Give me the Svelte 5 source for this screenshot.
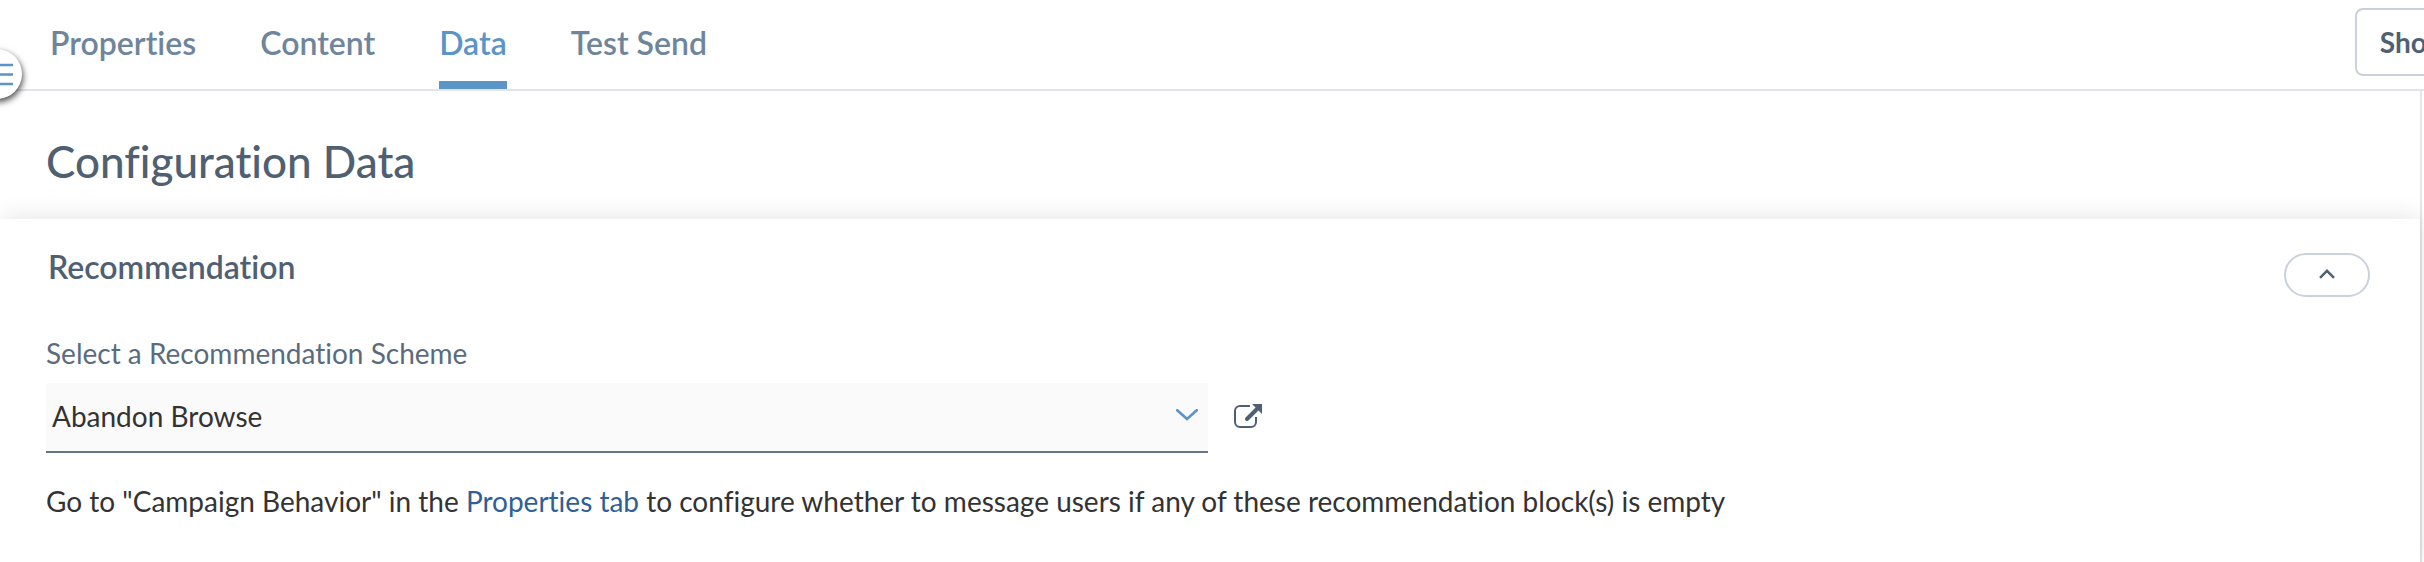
<script>
	let tabs = ['Properties', 'Content', 'Data', 'Test Send']
	let active = 'Data'
	let open = true

	let schemes = ['Abandon Browse']
	let scheme = schemes[0]
</script>

<div class="page">
	<header>
		<nav>
			{#each tabs as tab}
				<button class="tab" class:active={tab === active} on:click={() => active = tab}>{tab}</button>
			{/each}
		</nav>
		<button class="show-button">Show</button>
	</header>

	<button class="menu-toggle" aria-label="Toggle menu">
		<svg width="24" height="24" viewBox="0 0 24 24">
			<path d="M0 3h24M0 12.500h24M0 22h24" stroke="#5b94c6" stroke-width="2.500" />
		</svg>
	</button>

	<main>
		<h1>Configuration Data</h1>

		<section>
			<div class="section-head">
				<h2>Recommendation</h2>
				<button class="collapse" aria-label="Collapse section" aria-expanded={open} on:click={() => open = !open}>
					<svg class:closed={!open} width="16" height="12" viewBox="0 0 16 12">
						<path d="M1 8.800 8 1.800l7 7" fill="none" stroke="#4f6072" stroke-width="2.400" />
					</svg>
				</button>
			</div>

			{#if open}
				<label for="scheme">Select a Recommendation Scheme</label>
				<div class="scheme-row">
					<div class="select-box">
						<select id="scheme" bind:value={scheme}>
							{#each schemes as s}
								<option>{s}</option>
							{/each}
						</select>
						<svg class="arrow" width="22" height="12" viewBox="0 0 22 12">
							<path d="M1.200 1.200 11 10l9.800-8.800" fill="none" stroke="#5b94c6" stroke-width="2.600" stroke-linecap="round" />
						</svg>
					</div>
					<a class="external" href="#scheme" aria-label="Open scheme">
						<svg width="28" height="26" viewBox="0 0 28 26">
							<path d="M16 3H6a5 5 0 0 0-5 5v11a5 5 0 0 0 5 5h11a5 5 0 0 0 5-5v-5" fill="none" stroke="#4f6072" stroke-width="2" />
							<path d="M13 16 23 6" stroke="#4f6072" stroke-width="4" stroke-linecap="round" />
							<path d="M18 1h10v10z" fill="#4f6072" />
						</svg>
					</a>
				</div>
				<p>Go to "Campaign Behavior" in the <a href="#properties">Properties tab</a> to configure whether to message users if any of these recommendation block(s) is empty</p>
			{/if}
		</section>
	</main>
</div>

<style>
	:global(body) {
		background: #fff;
	}

	.page {
		position: relative;
		overflow: hidden;
		min-height: 100vh;
		display: flex;
		flex-direction: column;
		font-family: Lato, "Open Sans", sans-serif;
		font-variant-ligatures: none;
		font-size: 28px;
		line-height: 36px;
		color: #333;
	}

	button {
		font: inherit;
		font-variant-ligatures: none;
		background: #fff;
		cursor: pointer;
	}

	header {
		display: flex;
		justify-content: space-between;
		align-items: flex-start;
		height: 89px;
		padding-left: 50px;
		border-bottom: 2px solid #e1e4ea;
	}

	nav {
		display: flex;
		gap: 64px;
		height: 100%;
	}

	.tab {
		border: none;
		border-bottom: 8px solid transparent;
		padding: 4px 0 0;
		font-size: 32px;
		font-weight: 600;
		color: #6f859c;
	}
	.tab.active {
		color: #5b94c6;
		border-color: #5b94c6;
	}

	.show-button {
		flex: none;
		height: 68px;
		margin: 8px -50px 0 0;
		padding: 0 23px;
		border: 2px solid #cbd1da;
		border-radius: 8px;
		font-weight: 700;
		color: #4f6072;
	}

	.menu-toggle {
		position: absolute;
		top: 49px;
		left: -28px;
		display: flex;
		align-items: center;
		justify-content: flex-end;
		width: 50px;
		height: 50px;
		padding: 0 9px 0 0;
		border: none;
		border-radius: 50%;
		box-shadow: 1px 3px 6px rgba(0, 0, 0, 0.7);
	}

	main {
		flex: 1;
		display: flex;
		flex-direction: column;
		margin-right: 2px;
		border-right: 2px solid #e6e6e6;
	}

	h1 {
		margin: 0;
		padding: 46px 46px 34px;
		font-size: 44px;
		line-height: 48px;
		font-weight: 500;
		color: #4f6072;
	}

	section {
		flex: 1;
		padding: 30px 50px 30px 46px;
		background: #fff;
		box-shadow: 0 0 24px rgba(0, 0, 0, 0.12);
	}

	.section-head {
		display: flex;
		justify-content: space-between;
		align-items: flex-start;
		margin-bottom: 38px;
	}

	h2 {
		margin: 0;
		padding-left: 2px;
		font-size: 32px;
		line-height: 36px;
		font-weight: 600;
		color: #4f6072;
	}

	.collapse {
		width: 86px;
		height: 44px;
		margin-top: 4px;
		padding: 0;
		border: 2px solid #cbd1da;
		border-radius: 22px;
		display: flex;
		align-items: center;
		justify-content: center;
	}
	.closed {
		transform: rotate(180deg);
	}

	label {
		display: block;
		margin-bottom: 12px;
		color: #5a6b80;
	}

	.scheme-row {
		display: flex;
		align-items: center;
		gap: 26px;
		margin-bottom: 30px;
	}

	.select-box {
		position: relative;
		width: 50%;
	}

	select {
		display: block;
		appearance: none;
		width: 100%;
		height: 70px;
		padding: 0 48px 2px 6px;
		border: none;
		border-bottom: 2px solid #64748a;
		border-radius: 0;
		background: #fafafa;
		font: inherit;
		color: #333;
	}

	/* sits over the select, clicks go through to it */
	.arrow {
		position: absolute;
		right: 10px;
		top: 26px;
		pointer-events: none;
	}

	.external {
		display: flex;
		padding-bottom: 4px;
	}

	p {
		margin: 0;
	}
	p a {
		color: #2f5f96;
		text-decoration: none;
	}
</style>
